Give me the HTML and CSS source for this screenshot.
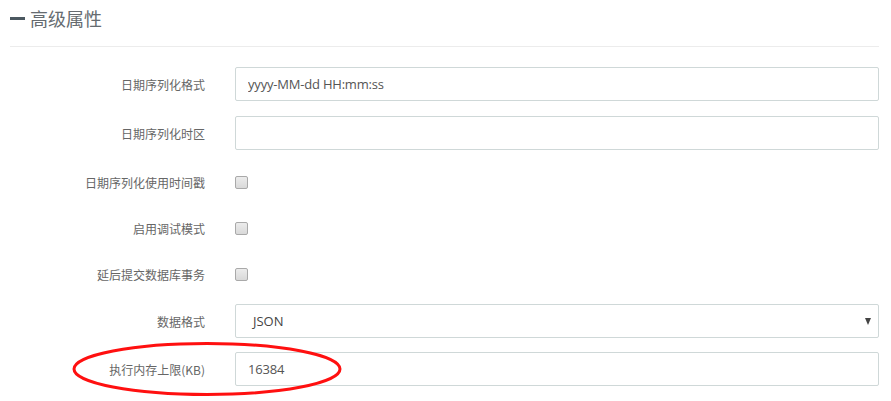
FILE: index.html
```html
<!DOCTYPE html>
<html lang="zh-CN">
<head>
<meta charset="utf-8">
<title>高级属性</title>
<link rel="stylesheet" href="styles.css">
</head>
<body>
<div class="panel">
  <div class="panel-head">
    <span class="minus"></span>
    <span class="title">高级属性</span>
  </div>
  <div class="form">
    <div class="row row-input">
      <label class="lbl">日期序列化格式</label>
      <div class="field"><input class="text" type="text" value="yyyy-MM-dd HH:mm:ss"></div>
    </div>
    <div class="row row-input">
      <label class="lbl">日期序列化时区</label>
      <div class="field"><input class="text" type="text" value=""></div>
    </div>
    <div class="row row-check">
      <label class="lbl">日期序列化使用时间戳</label>
      <div class="field"><span class="check"></span></div>
    </div>
    <div class="row row-check">
      <label class="lbl">启用调试模式</label>
      <div class="field"><span class="check"></span></div>
    </div>
    <div class="row row-check last-check">
      <label class="lbl">延后提交数据库事务</label>
      <div class="field"><span class="check"></span></div>
    </div>
    <div class="row row-select">
      <label class="lbl">数据格式</label>
      <div class="field"><div class="select"><span class="sel-text">JSON</span><span class="arrow"></span></div></div>
    </div>
    <div class="row row-input">
      <label class="lbl">执行内存上限(KB)</label>
      <div class="field"><input class="text" type="text" value="16384"></div>
    </div>
  </div>
</div>
<svg class="mark" width="272" height="58" viewBox="0 0 272 58" xmlns="http://www.w3.org/2000/svg">
  <ellipse cx="136" cy="29" rx="133" ry="25.5" fill="none" stroke="#ff1010" stroke-width="3"/>
</svg>
</body>
</html>
```
FILE: styles.css
```css
html, body {
  margin: 0;
  padding: 0;
  background: #fff;
}
body {
  font-family: "Noto Sans CJK SC", "Open Sans", sans-serif;
  color: #555;
  position: relative;
  width: 891px;
  height: 401px;
  overflow: hidden;
}
.panel {
  padding: 0 12px 0 10px;
}
.panel-head {
  display: flex;
  align-items: center;
  height: 36px;
  border-bottom: 1px solid #ececec;
  padding-bottom: 10px;
}
.minus {
  display: block;
  width: 15px;
  height: 3px;
  background: #4b5860;
  margin-right: 5px;
}
.title {
  font-size: 18px;
  color: #656b70;
  line-height: 24px;
}
.form {
  padding-top: 20px;
}
.row {
  display: flex;
  align-items: center;
}
.row-input, .row-select {
  height: 34px;
  margin-bottom: 15px;
}
.row-check {
  height: 34px;
  margin-bottom: 12px;
}
.last-check {
  margin-bottom: 13px;
}
.row-select {
  margin-bottom: 14px;
}
.lbl {
  width: 195px;
  text-align: right;
  font-size: 12px;
  color: #666;
  padding-right: 30px;
  flex: none;
}
.field {
  flex: 1;
  display: flex;
  align-items: center;
}
.text {
  box-sizing: border-box;
  width: 100%;
  height: 34px;
  border: 1px solid #cfd8d8;
  border-radius: 2px;
  padding: 0 12px;
  font-family: "Open Sans", sans-serif;
  font-size: 13px;
  letter-spacing: -0.2px;
  color: #555;
  outline: none;
  background: #fff;
}
.check {
  display: block;
  width: 11px;
  height: 11px;
  border: 1px solid #a9a9a9;
  border-radius: 2px;
  background: linear-gradient(#ececec, #d9d9d9);
}
.select {
  box-sizing: border-box;
  width: 100%;
  height: 34px;
  border: 1px solid #cfd8d8;
  border-radius: 2px;
  display: flex;
  align-items: center;
  justify-content: space-between;
  padding: 0 7px 0 17px;
  font-family: "Open Sans", sans-serif;
  font-size: 13px;
  color: #444;
}
.arrow {
  width: 0;
  height: 0;
  border-left: 3.5px solid transparent;
  border-right: 3.5px solid transparent;
  border-top: 7px solid #444;
}
.mark {
  position: absolute;
  left: 71px;
  top: 340px;
}
```
